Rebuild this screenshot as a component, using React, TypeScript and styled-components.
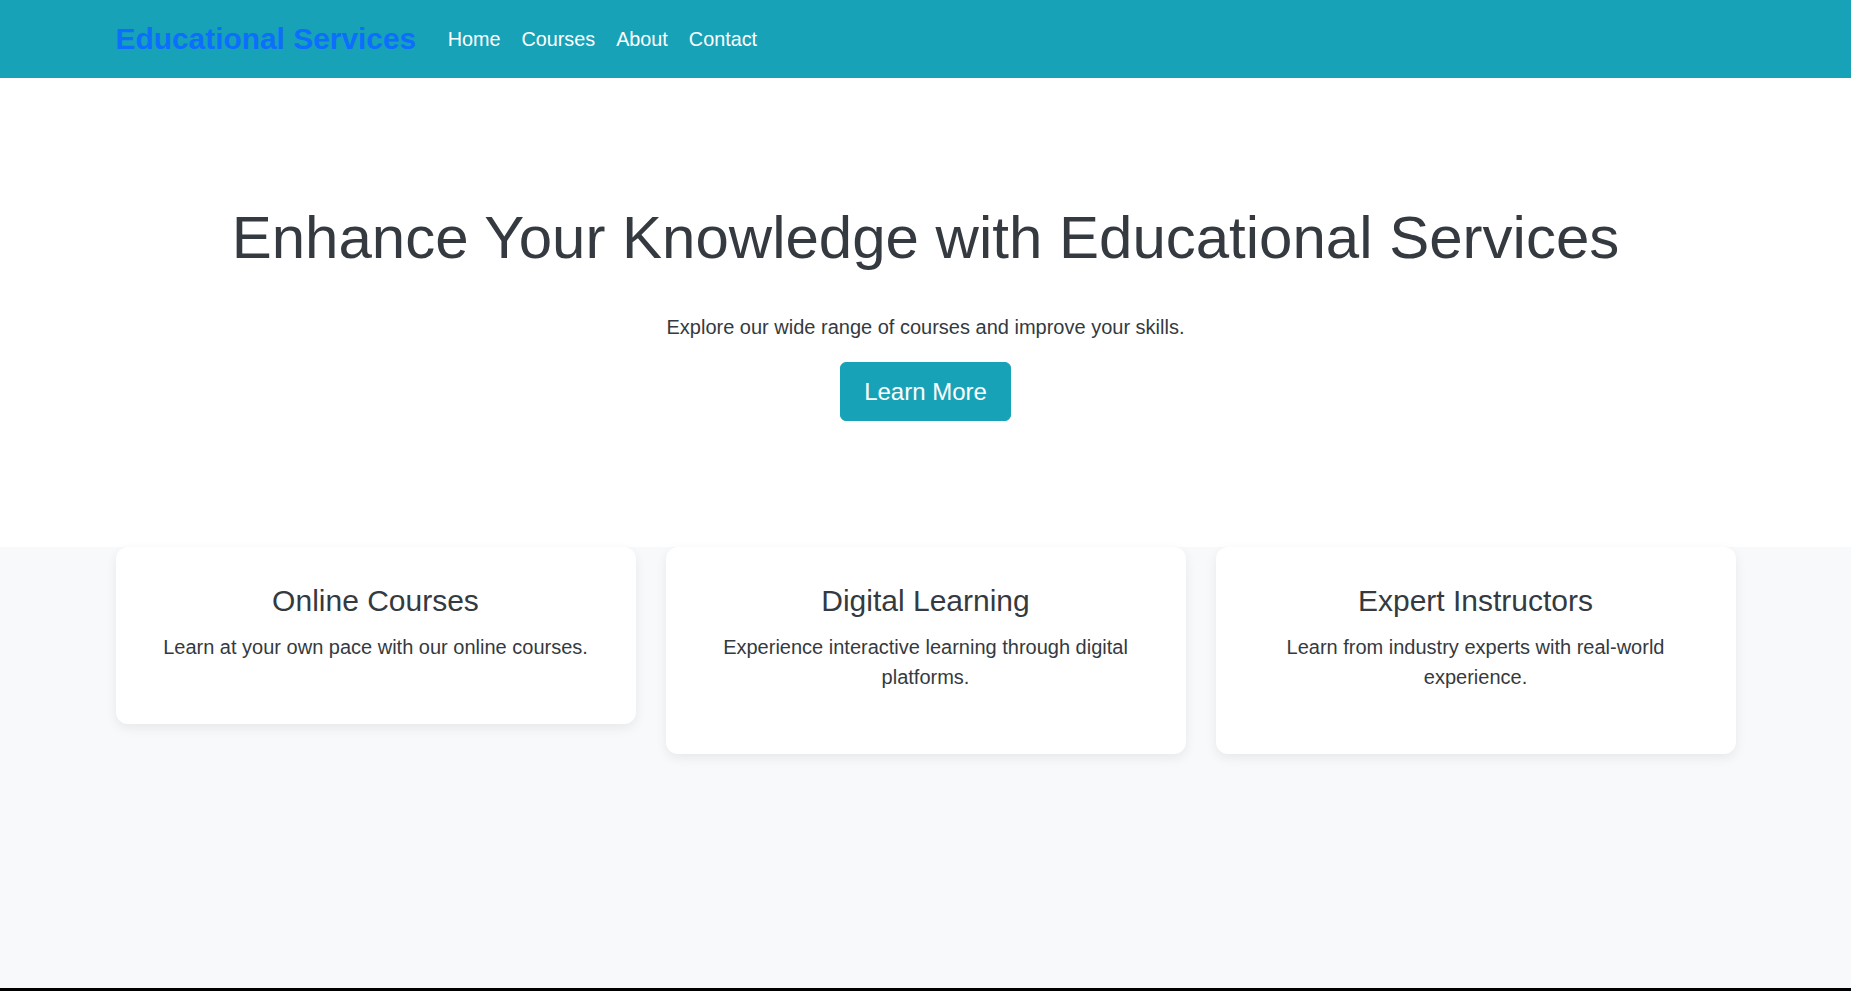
import React from "react";
import styled, { createGlobalStyle } from "styled-components";

const GlobalStyle = createGlobalStyle`
  html { background: #000; }
  body {
    margin: 0;
    background: #000;
    font-family: "Liberation Sans", Arial, sans-serif;
    color: #343a40;
  }
  * { box-sizing: border-box; }
`;

const Page = styled.div`
  display: flex;
  flex-direction: column;
  height: 988px;
  background: #fff;
`;

const NavBar = styled.nav`
  background: #17a2b8;
  height: 78px;
  flex-shrink: 0;
`;

const Container = styled.div`
  width: 1620px;
  margin: 0 auto;
`;

const NavInner = styled(Container)`
  height: 100%;
  display: flex;
  align-items: center;
`;

const Brand = styled.a`
  color: #0d6efd;
  font-weight: 700;
  font-size: 29.9px;
  line-height: 36px;
  text-decoration: none;
  margin-right: 21px;
`;

const NavList = styled.ul`
  display: flex;
  list-style: none;
  margin: 0;
  padding: 0;
`;

const NavLink = styled.a`
  display: block;
  color: #fff;
  font-size: 19.8px;
  line-height: 30px;
  padding: 0 10.5px;
  text-decoration: none;
`;

const Hero = styled.header`
  background: #fff;
  text-align: center;
  padding: 124px 0 126px;
  flex-shrink: 0;
`;

const HeroTitle = styled.h1`
  margin: 0 0 38px;
  font-size: 60px;
  font-weight: 400;
  line-height: 72px;
  color: #343a40;
`;

const HeroLead = styled.p`
  margin: 0 0 20px;
  font-size: 20px;
  line-height: 30px;
  color: #343a40;
`;

const Button = styled.a`
  display: inline-block;
  background: #17a2b8;
  color: #fff;
  border: 1px solid #17a2b8;
  border-radius: 6px;
  font-size: 24px;
  line-height: 35px;
  padding: 11px 23px;
  text-decoration: none;
`;

const Features = styled.section`
  flex: 1;
  background: #f8f9fa;
`;

const CardRow = styled(Container)`
  display: grid;
  grid-template-columns: repeat(3, 520px);
  gap: 30px;
  align-items: start;
`;

const Card = styled.div`
  background: #fff;
  border-radius: 12px;
  box-shadow: 0 4px 12px rgba(0, 0, 0, 0.07);
  padding: 36px;
  text-align: center;
`;

const CardTitle = styled.h3`
  margin: 0 0 13px;
  font-size: 30px;
  font-weight: 400;
  line-height: 36px;
  color: #343a40;
`;

const CardText = styled.p`
  margin: 0 0 26px;
  font-size: 20px;
  line-height: 30px;
  color: #343a40;
`;

const features = [
  { title: "Online Courses", text: "Learn at your own pace with our online courses." },
  { title: "Digital Learning", text: "Experience interactive learning through digital platforms." },
  { title: "Expert Instructors", text: "Learn from industry experts with real-world experience." },
];

export default function App() {
  return (
    <>
      <GlobalStyle />
      <Page>
        <NavBar>
          <NavInner>
            <Brand href="#">Educational Services</Brand>
            <NavList>
              {["Home", "Courses", "About", "Contact"].map((l) => (
                <li key={l}>
                  <NavLink href="#">{l}</NavLink>
                </li>
              ))}
            </NavList>
          </NavInner>
        </NavBar>
        <Hero>
          <HeroTitle>Enhance Your Knowledge with Educational Services</HeroTitle>
          <HeroLead>Explore our wide range of courses and improve your skills.</HeroLead>
          <Button href="#">Learn More</Button>
        </Hero>
        <Features>
          <CardRow>
            {features.map((f) => (
              <Card key={f.title}>
                <CardTitle>{f.title}</CardTitle>
                <CardText>{f.text}</CardText>
              </Card>
            ))}
          </CardRow>
        </Features>
      </Page>
    </>
  );
}
